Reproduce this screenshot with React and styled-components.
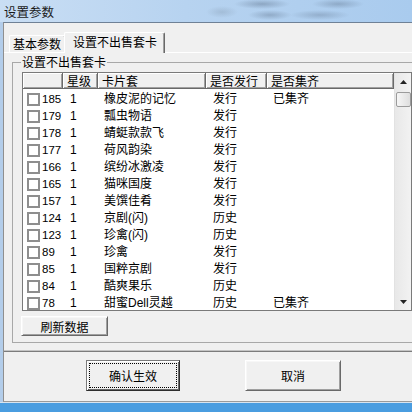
import React from 'react'
import styled, { createGlobalStyle } from 'styled-components'

const GlobalStyle = createGlobalStyle`
  html, body {
    margin: 0;
    padding: 0;
  }
  body {
    font-family: "Liberation Sans", "Noto Sans CJK SC", sans-serif;
    font-size: 12px;
    color: #000;
  }
`

const COLUMNS = '40px 35px 108px 61px 127px'

const cards = [
    { id: 185, name: '橡皮泥的记忆', issue: '发行', done: '已集齐' },
    { id: 179, name: '瓢虫物语', issue: '发行' },
    { id: 178, name: '蜻蜓款款飞', issue: '发行' },
    { id: 177, name: '荷风韵染', issue: '发行' },
    { id: 166, name: '缤纷冰激凌', issue: '发行' },
    { id: 165, name: '猫咪国度', issue: '发行' },
    { id: 157, name: '美馔佳肴', issue: '发行' },
    { id: 124, name: '京剧(闪)', issue: '历史' },
    { id: 123, name: '珍禽(闪)', issue: '历史' },
    { id: 89, name: '珍禽', issue: '发行' },
    { id: 85, name: '国粹京剧', issue: '发行' },
    { id: 84, name: '酷爽果乐', issue: '历史' },
    { id: 78, name: '甜蜜Dell灵越', issue: '历史', done: '已集齐' },
]

const Frame = styled.div`
    width: 412px;
    height: 412px;
    overflow: hidden;
    display: flex;
    flex-direction: column;
    background: #b3cdea;
`

const TitleBar = styled.div`
    height: 22px;
    flex: none;
    display: flex;
    align-items: center;
    padding-left: 4px;
    font-family: "Noto Sans CJK SC", sans-serif;
    font-size: 12.5px;
    color: #1a1a1a;
    background:
        radial-gradient(ellipse 28px 5px at 262px 4px, rgba(95, 115, 140, 0.45), transparent),
        radial-gradient(ellipse 26px 5px at 338px 4px, rgba(95, 115, 140, 0.4), transparent),
        radial-gradient(ellipse 22px 5px at 270px 15px, rgba(95, 115, 140, 0.4), transparent),
        radial-gradient(ellipse 30px 5px at 320px 15px, rgba(95, 115, 140, 0.35), transparent),
        radial-gradient(ellipse 16px 6px at 222px 12px, rgba(120, 140, 160, 0.3), transparent),
        linear-gradient(to right, #c9def4 0%, #b7d3f0 45%, #a9cbee 100%);
`

const Client = styled.div`
    width: 420px;
    height: 380px;
    flex: none;
    margin-left: 3px;
    box-sizing: border-box;
    background: #f0f0f0;
    border-top: 1px solid #6f8196;
    border-left: 1px solid #8f8f8f;
    border-bottom: 1px solid #9a9a9a;
    display: flex;
    flex-direction: column;
`

const BottomEdge = styled.div`
    flex: 1;
    background: #4a9de0;
    border-top: 1px solid #d8e4ef;
`

const TabStrip = styled.div`
    height: 29px;
    flex: none;
    display: flex;
    align-items: flex-end;
    padding-left: 5px;
    position: relative;
    z-index: 1;
`

const Tab = styled.div`
    box-sizing: border-box;
    height: ${p => (p.active ? '21px' : '17px')};
    margin-bottom: ${p => (p.active ? '-1px' : '0')};
    margin-left: ${p => (p.active ? '-2px' : '0')};
    padding: ${p => (p.active ? '0 7px 2px 8px' : '0 4px 0 3px')};
    display: flex;
    align-items: center;
    background: #f0f0f0;
    border-top: 1px solid #fff;
    border-left: 1px solid #fff;
    border-right: 1px solid #696969;
    box-shadow: inset -1px 0 0 #a0a0a0;
    border-radius: 2px 2px 0 0;
    font-family: "Noto Sans CJK SC", sans-serif;
    line-height: 14px;
`

const TabPanel = styled.div`
    flex: none;
    border-top: 1px solid #fff;
    border-bottom: 1px solid #7c7c7c;
    box-shadow: inset 0 -1px 0 #c4c4c4;
    padding: 2px 0 8px 8px;
`

const GroupBox = styled.fieldset`
    margin: 0;
    padding: 0 0 6px 0;
    width: 420px;
    box-sizing: border-box;
    border: 1px solid #a8a8a8;
    min-inline-size: 0;
`

const Caption = styled.legend`
    margin-left: 8px;
    padding: 0 1px;
    line-height: 14px;
    font-family: "Noto Sans CJK SC", sans-serif;
`

const ListView = styled.div`
    margin: 3px 0 0 9px;
    width: 390px;
    height: 239px;
    box-sizing: border-box;
    border: 1px solid #7a7a7a;
    background: #fff;
    display: grid;
    grid-template-columns: 371px 17px;
    grid-template-rows: 16px 1fr;
    overflow: hidden;
`

const HeaderRow = styled.div`
    display: grid;
    grid-template-columns: ${COLUMNS};
`

const HeaderCell = styled.div`
    box-sizing: border-box;
    height: 16px;
    padding-left: 4px;
    background: #f0f0f0;
    border-right: 1px solid #696969;
    border-bottom: 1px solid #696969;
    box-shadow: inset 1px 1px 0 #fff, inset -1px -1px 0 #a0a0a0;
    line-height: 15px;
    font-family: "Noto Sans CJK SC", sans-serif;
    white-space: nowrap;
`

const Rows = styled.div`
    grid-column: 1;
    padding-top: 2px;
    overflow: hidden;
`

const Row = styled.div`
    display: grid;
    grid-template-columns: ${COLUMNS};
    height: 17px;
    line-height: 17px;
    white-space: nowrap;
`

const Cell = styled.div`
    padding-left: ${p => p.pad || 6}px;
    overflow: hidden;
`

const IdCell = styled.div`
    display: flex;
    align-items: center;
    gap: 2px;
    padding-left: 4px;
    font-size: 11.5px;
`

const CheckBox = styled.span`
    width: 13px;
    height: 13px;
    box-sizing: border-box;
    border: 2px solid #8e8e8e;
    background: #fff;
    flex: none;
`

const ScrollBar = styled.div`
    grid-column: 2;
    grid-row: 1 / span 2;
    display: flex;
    flex-direction: column;
    align-items: center;
    background: linear-gradient(to right, #e8e8e8, #f2f2f2);
    border-left: 1px solid #e2e2e2;
`

const ArrowButton = styled.div`
    width: 100%;
    height: 17px;
    flex: none;
    display: flex;
    align-items: center;
    justify-content: center;
`

const Thumb = styled.div`
    width: 15px;
    height: 15px;
    margin-top: 2px;
    box-sizing: border-box;
    border: 1px solid #9b9b9b;
    border-radius: 2px;
    background: linear-gradient(to right, #f6f6f6, #dedede);
    flex: none;
`

const Track = styled.div`
    flex: 1;
`

const Button = styled.button`
    box-sizing: border-box;
    width: ${p => p.w}px;
    height: ${p => p.h}px;
    margin: 0;
    padding: 0;
    background: #f0f0f0;
    border: 1px solid;
    border-color: ${p => (p.primary ? '#7a7a7a #2e2e2e #2e2e2e #7a7a7a' : '#fff #696969 #696969 #fff')};
    box-shadow: ${p => (p.primary
        ? 'inset 1px 1px 0 #fff, inset -1px -1px 0 #696969'
        : 'inset 1px 1px 0 #f7f7f7, inset -1px -1px 0 #a0a0a0')};
    outline: ${p => (p.primary ? '1px dotted #000' : 'none')};
    outline-offset: -4px;
    font-family: "Noto Sans CJK SC", sans-serif;
    font-size: 12px;
    color: #000;
`

const RefreshButton = styled(Button)`
    display: block;
    margin: 5px 0 0 8px;
`

const ButtonBar = styled.div`
    display: flex;
    gap: 65px;
    padding: 8px 0 0 82px;
`

const UpArrow = () => (
    <svg width="7" height="4" viewBox="0 0 7 4">
        <path d="M3.5 0 L7 4 L0 4 Z" fill="#222" />
    </svg>
)

const DownArrow = () => (
    <svg width="7" height="4" viewBox="0 0 7 4">
        <path d="M0 0 L7 0 L3.5 4 Z" fill="#222" />
    </svg>
)

const App = () => (
    <Frame>
        <GlobalStyle />
        <TitleBar>设置参数</TitleBar>
        <Client>
            <TabStrip>
                <Tab>基本参数</Tab>
                <Tab active>设置不出售套卡</Tab>
            </TabStrip>
            <TabPanel>
                <GroupBox>
                    <Caption>设置不出售套卡</Caption>
                    <ListView>
                        <HeaderRow>
                            <HeaderCell />
                            <HeaderCell>星级</HeaderCell>
                            <HeaderCell>卡片套</HeaderCell>
                            <HeaderCell>是否发行</HeaderCell>
                            <HeaderCell>是否集齐</HeaderCell>
                        </HeaderRow>
                        <ScrollBar>
                            <ArrowButton><UpArrow /></ArrowButton>
                            <Thumb />
                            <Track />
                            <ArrowButton><DownArrow /></ArrowButton>
                        </ScrollBar>
                        <Rows>
                            {cards.map(card => (
                                <Row key={card.id}>
                                    <IdCell>
                                        <CheckBox />
                                        {card.id}
                                    </IdCell>
                                    <Cell pad={7}>1</Cell>
                                    <Cell>{card.name}</Cell>
                                    <Cell pad={7}>{card.issue}</Cell>
                                    <Cell>{card.done}</Cell>
                                </Row>
                            ))}
                        </Rows>
                    </ListView>
                    <RefreshButton w={87} h={20}>刷新数据</RefreshButton>
                </GroupBox>
            </TabPanel>
            <ButtonBar>
                <Button primary w={94} h={31}>确认生效</Button>
                <Button w={96} h={31}>取消</Button>
            </ButtonBar>
        </Client>
        <BottomEdge />
    </Frame>
)

export default App
